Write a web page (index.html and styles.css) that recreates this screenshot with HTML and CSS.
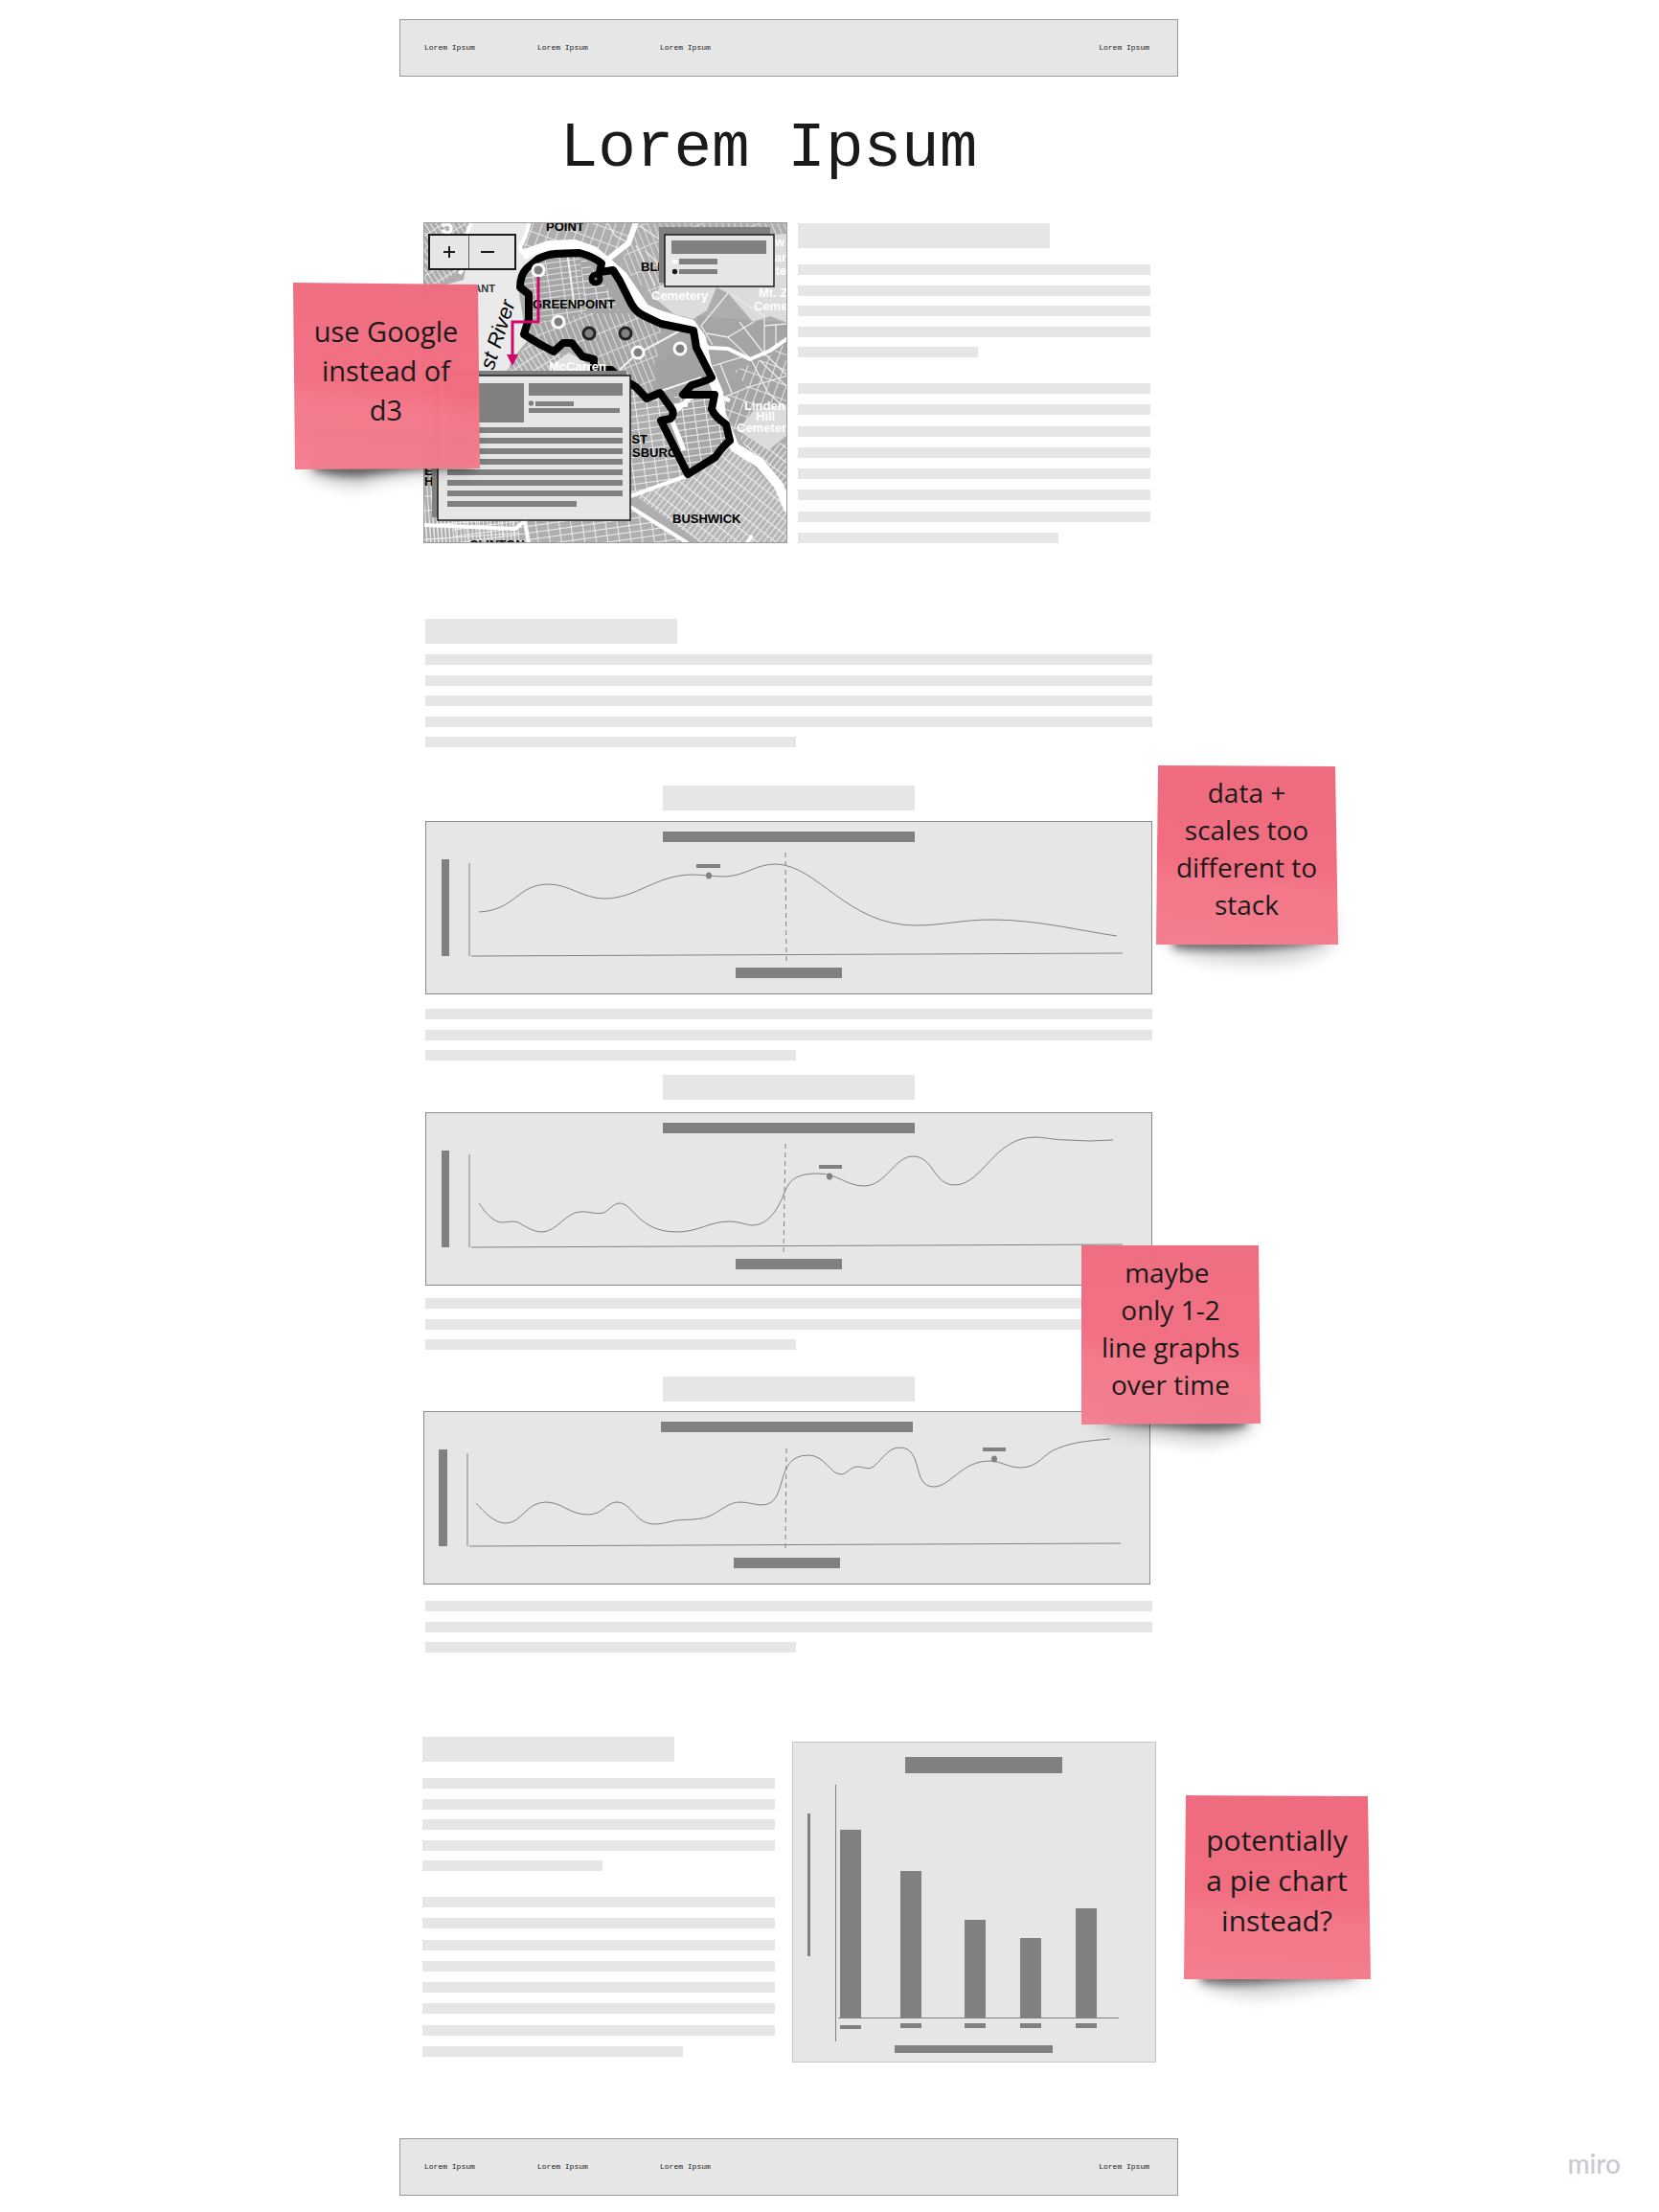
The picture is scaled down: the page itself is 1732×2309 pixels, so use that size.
FILE: index.html
```html
<!DOCTYPE html>
<html lang="en">
<head>
<meta charset="utf-8">
<meta name="viewport" content="width=device-width, initial-scale=1">
<title>Lorem Ipsum</title>
<link rel="stylesheet" href="styles.css">
</head>
<body>
<div class="board">
  <div class="wireframe">
    <header>
      <nav class="nav" aria-label="Main">
        <a href="#map">Lorem Ipsum</a>
        <a href="#trends">Lorem Ipsum</a>
        <a href="#totals">Lorem Ipsum</a>
        <a href="#top">Lorem Ipsum</a>
      </nav>
    </header>

    <main>
      <h1 class="title">Lorem Ipsum</h1>

      <section class="intro" id="map">
        <div class="map">
          <svg class="drawing" viewBox="0 0 380 335" role="img" aria-label="Map of Greenpoint">
            <defs>
              <pattern id="streets-core" width="15" height="6" patternUnits="userSpaceOnUse" patternTransform="rotate(-8)">
                <path d="M0 .5H15M.5 0V6" stroke="#e2e2e2" stroke-width="1"/>
              </pattern>
              <pattern id="streets-mid" width="6" height="22" patternUnits="userSpaceOnUse" patternTransform="rotate(-22)">
                <path d="M0 .5H6M.5 0V22" stroke="#dedede" stroke-width="1"/>
              </pattern>
              <pattern id="streets-north" width="9" height="15" patternUnits="userSpaceOnUse" patternTransform="rotate(20)">
                <path d="M0 .5H9M.5 0V15" stroke="#e6e6e6" stroke-width="1"/>
              </pattern>
              <pattern id="streets-dense" width="5" height="12" patternUnits="userSpaceOnUse" patternTransform="rotate(38)">
                <path d="M0 .5H5M.5 0V12" stroke="#ededed" stroke-width="1.1"/>
              </pattern>
              <pattern id="streets-south" width="12" height="7" patternUnits="userSpaceOnUse" patternTransform="rotate(-8)">
                <path d="M0 .5H12M.5 0V7" stroke="#ededed" stroke-width="1"/>
              </pattern>
              <pattern id="streets-west" width="5" height="12" patternUnits="userSpaceOnUse" patternTransform="rotate(-32)">
                <path d="M0 .5H5M.5 0V12" stroke="#e8e8e8" stroke-width="1"/>
              </pattern>
              <pattern id="streets-bank" width="4" height="15" patternUnits="userSpaceOnUse" patternTransform="rotate(-4)">
                <path d="M0 .5H4M.5 0V15" stroke="#ededed" stroke-width="1"/>
              </pattern>
              <path id="district" d="M120 38Q128 34 138 33L163 32Q178 36 186 43L184 52L198 50L205 61L217 85Q222 94 231 98L248 106L282 113L285 131L301 162Q298 165 280 170L271 180H304L301 195Q304 203 316 211L320 228Q313 233 305 245L276 263L248 207L258 205Q262 201 260 196L247 178L233 184L222 172L205 162L196 154H178V143L166 140L155 126H146L136 135L121 127L105 117L110 101V75L101 68Q101 55 108 48Z"/>
              <clipPath id="district-clip"><use href="#district"/></clipPath>
            </defs>
            <rect width="380" height="335" fill="#aeaeae"/>
            <!-- street grids around the district -->
            <path d="M0 0H50L36 51L0 78Z" fill="url(#streets-west)"/>
            <path d="M0 230H30V335H0Z" fill="url(#streets-bank)"/>
            <path d="M104 0H226L212 22L190 40L158 22L130 22L104 30Z" fill="url(#streets-north)"/>
            <path d="M226 0H380V12L330 50L305 68L285 98L238 76L206 45L214 22Z" fill="url(#streets-mid)"/>
            <path d="M285 98L380 105V210L328 214L312 200L298 140Z" fill="#a5a5a5"/>
            <path d="M325 155L360 140L380 125V210L350 190ZM298 188L380 160V205L325 218Z" fill="url(#streets-north)"/>
            <path d="M216 165L246 180L260 200L250 207L276 264L217 282Z" fill="url(#streets-south)"/>
            <path d="M216 282L276 264L320 230L380 292V335H290Z" fill="#b7b7b7"/>
            <path d="M216 282L276 264L320 230L380 292V335H290Z" fill="url(#streets-dense)"/>
            <path d="M328 222L380 232V300L350 254Z" fill="url(#streets-dense)"/>
            <path d="M110 312H216V300L275 335H30V312Z" fill="url(#streets-south)"/>
            <path d="M0 312H100V335H0Z" fill="url(#streets-bank)"/>
            <path d="M86 154L110 126L150 140L178 152V160H86Z" fill="url(#streets-west)"/>
            <!-- river and cemeteries -->
            <path d="M50 0H111L106 16L101 26L104 35L130 28L112 42L99 68L106 112L110 122L95 140L86 158L60 200L0 230V80L20 66L42 60L46 36L40 26Z" fill="#eaeaea"/>
            <path d="M50 0L40 26L46 38L38 54M111 0L106 16L101 26L104 34" fill="none" stroke="#fff" stroke-width="4"/>
            <path d="M240 78L248 66L310 60L372 62L380 72V105L362 98L344 104L318 74L306 68L296 92L282 101L262 96Z" fill="#dcdcdc"/>
            <path d="M345 14L380 12V72H366Z" fill="#dcdcdc"/>
            <path d="M328 217L345 196L380 190V222L360 238Z" fill="#dcdcdc"/>
            <!-- loose roads -->
            <g fill="none" stroke="#ececec" stroke-width="1.3">
              <path d="M318 74L290 108L302 128M345 104L318 120L296 116M322 76L356 98V108L380 106M330 104L354 135L380 160M342 143L360 178L380 196M300 188L340 172L380 160M302 150L335 140M322 178L310 148M352 145L380 172M356 108V140M318 120L342 143M368 106V128"/>
              <path d="M226 4L250 20M232 30L250 48M222 24L242 66M192 0L200 14L215 22"/>
            </g>
            <!-- creek -->
            <g fill="none" stroke="#fff" stroke-linejoin="round">
              <path d="M104 34L131 24L158 23L178 30L191 41L208 56L231 90L250 99L279 106L290 121L296 150L308 178L311 201L325 235L351 251L371 275L382 301" stroke-width="10"/>
              <path d="M191 40L214 22L222 0" stroke-width="6"/>
              <path d="M290 124L298 131L318 132L341 143L362 134L382 120M308 182L320 186" stroke-width="4"/>
            </g>
            <path d="M214 60L230 86L248 92L280 102L286 116L252 106L228 100Z" fill="#fff"/>
            <!-- district interior -->
            <use href="#district" fill="#a6a6a6"/>
            <g clip-path="url(#district-clip)">
              <path d="M100 30H162L170 95L150 100L104 108Z" fill="url(#streets-core)"/>
              <path d="M104 108L168 95H222L248 108L240 180L100 130Z" fill="url(#streets-mid)"/>
              <path d="M164 32L186 60L205 92L168 90Z" fill="url(#streets-south)"/>
              <path d="M262 182L320 185V270H270Z" fill="url(#streets-south)"/>
              <path d="M241 148L283 125L300 160L248 176Z" fill="#a2a2a2"/>
              <path d="M150 30L158 90M205 154L222 138L270 112M248 176L290 162" fill="none" stroke="#f2f2f2" stroke-width="2"/>
              <path d="M258 202L280 182M256 198L272 238M262 192L276 190" fill="none" stroke="#fff" stroke-width="5"/>
            </g>
            <path d="M132 150L152 136L166 144L176 152V158H140Z" fill="#e2e2e2"/>
            <path d="M216 286L274 265M216 297L276 335M0 316L96 320L110 308M106 312L110 335M338 335L343 327" fill="none" stroke="#fff" stroke-width="4"/>
            <use href="#district" fill="none" stroke="#000" stroke-width="8" stroke-linejoin="round"/>
            <circle cx="180" cy="59" r="4.500" fill="#808080" stroke="#000" stroke-width="6"/>
            <!-- place names -->
            <g class="place">
              <text x="128" y="9">POINT</text>
              <text x="114" y="90">GREENPOINT</text>
              <text x="227" y="51">BLI</text>
              <text x="234" y="231" text-anchor="end">ST</text>
              <text x="265" y="245" text-anchor="end">SBURG</text>
              <text x="260" y="314">BUSHWICK</text>
              <text x="48" y="341">CLINTON</text>
              <text x="1" y="264">E</text>
              <text x="1" y="275">H</text>
            </g>
            <text class="place-light" x="75" y="73" text-anchor="end">ANT</text>
            <g class="place-white">
              <text x="238" y="81">Cemetery</text>
              <text x="377" y="25" text-anchor="end">w</text>
              <text x="379" y="41" text-anchor="end">ar</text>
              <text x="379" y="55" text-anchor="end">te</text>
              <text x="350" y="78">Mt. Z</text>
              <text x="345" y="92">Ceme</text>
              <text x="335" y="196">Linden</text>
              <text x="347" y="207">Hill</text>
              <text x="327" y="219">Cemeter</text>
              <text x="131" y="155">McCarren</text>
            </g>
            <text class="place-route" x="18" y="12">5</text>
            <text class="place-river" transform="translate(96 84) rotate(-72)" text-anchor="end">st River</text>
            <!-- pins -->
            <g fill="#808080" stroke-width="3">
              <g stroke="#fff">
                <circle cx="120" cy="50" r="6"/><circle cx="141" cy="104" r="6"/>
                <circle cx="224" cy="136" r="6"/><circle cx="268" cy="132" r="6"/>
              </g>
              <g stroke="#222">
                <circle cx="173" cy="116" r="6"/><circle cx="211" cy="116" r="6"/>
              </g>
            </g>
            <path d="M120 57V104H93V140" fill="none" stroke="#d1086a" stroke-width="3"/>
            <path d="M87 138H99L93 150Z" fill="#d1086a"/>
            <!-- legend -->
            <rect x="246" y="5" width="116" height="58" fill="#808080"/>
            <rect x="252" y="13" width="114" height="54" fill="#e6e6e6" stroke="#1a1a1a" stroke-width="1.500"/>
            <path d="M259 19H358V33H259ZM267 38H307V44H267ZM267 49H307V54H267Z" fill="#808080"/>
            <circle cx="262.500" cy="41" r="2.500" fill="#fff"/>
            <circle cx="262.500" cy="51.500" r="2.700" fill="#1a1a1a"/>
            <!-- detail card -->
            <rect x="9" y="155" width="203" height="153" fill="#808080"/>
            <rect x="15" y="160" width="201" height="151" fill="#e6e6e6" stroke="#1a1a1a" stroke-width="1.500"/>
            <path d="M25 168H105V209H25ZM110 168H208V181H110ZM117 187H157V192H117ZM110 194H205V199H110ZM25 214H208V220H25ZM25 225H208V231H25ZM25 236H208V242H25ZM25 247H208V253H25ZM25 258H208V264H25ZM25 269H208V275H25ZM25 280H208V286H25ZM25 291H160V297H25Z" fill="#808080"/>
            <circle cx="112.500" cy="189" r="2.700" fill="#808080"/>
            <rect x=".5" y=".5" width="379" height="334" fill="none" stroke="#9a9a9a"/>
          </svg>
          <div class="map-zoom">
            <button type="button" aria-label="Zoom in">
              <svg width="12" height="12" viewBox="0 0 12 12"><path d="M0 6H12M6 0V12" stroke="#1a1a1a" stroke-width="2"/></svg>
            </button>
            <button type="button" aria-label="Zoom out">
              <svg width="14" height="12" viewBox="0 0 14 12"><path d="M0 6H14" stroke="#1a1a1a" stroke-width="2"/></svg>
            </button>
          </div>
        </div>
        <div class="copy">
          <div class="heading"></div>
          <div class="lines lines-5"><i></i><i></i><i></i><i></i><i class="half"></i></div>
          <div class="lines lines-8"><i></i><i></i><i></i><i></i><i></i><i></i><i></i><i class="most"></i></div>
        </div>
      </section>

      <section class="trends" id="trends">
        <div class="heading"></div>
        <div class="lines lines-5"><i></i><i></i><i></i><i></i><i class="half"></i></div>

        <article class="trend trend-first">
          <div class="heading"></div>
          <svg class="drawing" viewBox="0 0 759 181" role="img" aria-label="Line graph">
            <rect class="frame" x=".5" y=".5" width="758" height="180"/>
            <path class="solid" d="M248 11H511V22H248ZM17 40H25V141H17ZM324 153H435V164H324ZM283 45H308V49H283Z"/>
            <path class="axis" d="M46 44V141M48 141L728 138"/>
            <path class="cutoff" d="M376 33L377 148"/>
            <path class="curve" d="M56 95C95 93 95 66 129 66C150 66 165 81 187 81C220 81 240 57 277 56C290 56 300 58 313 58C335 57 345 45 366 45C410 46 440 109 512 109C540 109 560 103 591 103C640 103 685 115 722 120"/>
            <ellipse class="solid" cx="296" cy="57" rx="3" ry="3.500"/>
          </svg>
          <div class="lines lines-3"><i></i><i></i><i class="half"></i></div>
        </article>

        <article class="trend trend-second">
          <div class="heading"></div>
          <svg class="drawing" viewBox="0 0 759 181" role="img" aria-label="Line graph">
            <rect class="frame" x=".5" y=".5" width="758" height="180"/>
            <path class="solid" d="M248 11H511V22H248ZM17 40H25V141H17ZM324 153H435V164H324ZM411 55H435V59H411Z"/>
            <path class="axis" d="M46 44V141M48 141L728 138"/>
            <path class="cutoff" d="M376 33L374 148"/>
            <path class="curve" d="M56 95C62 104 71 115 80 115C85 115 91 113 97 115C104 119 113 125 122 125C137 125 147 104 162 104C170 103 177 107 186 105C192 102 197 95 203 95C217 95 222 125 263 125C285 125 297 114 317 114C328 114 335 118 342 118C354 118 363 108 369 97C379 79 376 64 410 64C430 64 440 77 458 77C481 77 490 46 509 46C531 46 530 76 553 76C583 75 593 26 637 26C645 26 657 29 670 29Q692 31 718 29"/>
            <ellipse class="solid" cx="422" cy="67" rx="3" ry="3.500"/>
          </svg>
          <div class="lines lines-3"><i></i><i></i><i class="half"></i></div>
        </article>

        <article class="trend trend-third">
          <div class="heading"></div>
          <svg class="drawing" viewBox="0 0 759 181" role="img" aria-label="Line graph">
            <rect class="frame" x=".5" y=".5" width="758" height="180"/>
            <path class="solid" d="M248 11H511V22H248ZM16 40H25V141H16ZM324 153H435V164H324ZM584 38H608V42H584Z"/>
            <path class="axis" d="M46 44V141M48 141L728 138"/>
            <path class="cutoff" d="M379 39L378 146"/>
            <path class="curve" d="M55 96C63 105 74 117 86 117C103 117 107 95 128 95C145 95 152 108 172 108C188 108 191 95 202 95C218 95 220 118 242 118C250 118 258 115 264 114C275 113 289 114 300 109C312 103 319 95 331 95C340 95 346 98 353 98C383 98 364 46 402 46C419 46 425 66 436 66C442 66 446 58 453 58C460 58 462 61 468 59C477 54 484 38 497 38C523 38 509 79 533 79C550 79 562 52 591 52C603 52 611 59 623 59C643 59 647 44 662 39C679 32 695 31 717 29"/>
            <ellipse class="solid" cx="596" cy="50" rx="3" ry="3.500"/>
          </svg>
          <div class="lines lines-3"><i></i><i></i><i class="half"></i></div>
        </article>
      </section>

      <section class="totals" id="totals">
        <div class="copy">
          <div class="heading"></div>
          <div class="lines lines-5"><i></i><i></i><i></i><i></i><i class="half"></i></div>
          <div class="lines lines-8"><i></i><i></i><i></i><i></i><i></i><i></i><i></i><i class="most"></i></div>
        </div>
        <svg class="drawing bar-chart" viewBox="0 0 380 335" role="img" aria-label="Bar chart">
          <rect class="frame" x=".5" y=".5" width="379" height="334"/>
          <path class="solid" d="M118 16H282V33H118ZM16 75H19V224H16ZM107 317H272V325H107Z"/>
          <path class="solid" d="M50 92H72V289H50ZM113 135H135V289H113ZM180 186H202V289H180ZM238 205H260V289H238ZM296 174H318V289H296Z"/>
          <path class="solid" d="M50 296H72V300H50ZM113 294H135V299H113ZM180 294H202V299H180ZM238 294H260V299H238ZM296 294H318V299H296Z"/>
          <path class="axis" d="M45.500 45V313M48 288.500H341"/>
        </svg>
      </section>
    </main>

    <aside class="note note-map">
      <svg class="note-paper" viewBox="0 0 195 195" preserveAspectRatio="none" aria-hidden="true">
        <defs>
          <linearGradient id="paper" x1=".1" y1="0" x2="0" y2="1">
            <stop offset="0" stop-color="#ef6c80"/><stop offset=".5" stop-color="#f16d80"/>
            <stop offset=".62" stop-color="#f3788a"/><stop offset=".8" stop-color="#f27a8b"/><stop offset="1" stop-color="#f47f90"/>
          </linearGradient>
          <filter id="soft" x="-20%" y="-100%" width="140%" height="300%"><feGaussianBlur stdDeviation="4"/></filter>
          <filter id="softer" x="-20%" y="-100%" width="140%" height="300%"><feGaussianBlur stdDeviation="8"/></filter>
        </defs>
        <path d="M10 150H190V196Q110 200 70 213Q35 212 14 198Z" fill="#000" opacity=".2" filter="url(#softer)"/>
        <path d="M20 180H186V193Q120 194 75 202Q45 204 22 196Z" fill="#000" opacity=".5" filter="url(#soft)"/>
        <path d="M0 0L193 2L195 194L2 195Z" fill="url(#paper)" fill-opacity=".98"/>
      </svg>
      <p>use Google<br>instead of<br>d3</p>
    </aside>
    <aside class="note note-scales">
      <svg class="note-paper" viewBox="0 0 190 186" preserveAspectRatio="none" aria-hidden="true">
        <path d="M10 150H185V188Q150 210 90 206Q35 204 14 190Z" fill="#000" opacity=".16" filter="url(#softer)"/>
        <path d="M18 170H170V184Q120 194 70 192Q40 192 18 190Z" fill="#000" opacity=".48" filter="url(#soft)"/>
        <path d="M2 0L187 1L190 186L0 186Z" fill="url(#paper)"/>
      </svg>
      <p>data +<br>scales too<br>different to<br>stack</p>
    </aside>
    <aside class="note note-graphs">
      <svg class="note-paper" viewBox="0 0 187 187" preserveAspectRatio="none" aria-hidden="true">
        <path d="M10 150H180V190Q150 212 110 206Q60 200 14 188Z" fill="#000" opacity=".18" filter="url(#softer)"/>
        <path d="M24 170H172V189Q140 196 110 192Q70 189 30 185Z" fill="#000" opacity=".5" filter="url(#soft)"/>
        <path d="M0 0L185 0L187 186L0 187Z" fill="url(#paper)" fill-opacity=".98"/>
      </svg>
      <p>maybe&nbsp;<br>only 1-2<br>line graphs<br>over time</p>
    </aside>
    <aside class="note note-pie">
      <svg class="note-paper" viewBox="0 0 195 192" preserveAspectRatio="none" aria-hidden="true">
        <path d="M10 150H185V194Q130 204 80 210Q35 208 14 196Z" fill="#000" opacity=".18" filter="url(#softer)"/>
        <path d="M18 175H174V190Q120 192 75 197Q40 199 18 195Z" fill="#000" opacity=".48" filter="url(#soft)"/>
        <path d="M2 0L192 1L195 192L0 192Z" fill="url(#paper)"/>
      </svg>
      <p>potentially<br>a pie chart<br>instead?</p>
    </aside>
  </div>

  <footer class="footer">
    <nav class="nav" aria-label="Footer">
      <a href="#map">Lorem Ipsum</a>
      <a href="#trends">Lorem Ipsum</a>
      <a href="#totals">Lorem Ipsum</a>
      <a href="#top">Lorem Ipsum</a>
    </nav>
  </footer>
  <div class="brand">miro</div>
</div>
</body>
</html>
```

FILE: styles.css
```css
* {
  box-sizing: border-box;
}

body {
  margin: 0;
  background: #fff;
  color: #1a1a1a;
  font-family: "Open Sans", "Noto Sans", sans-serif;
}

.board {
  display: grid;
  grid-template-columns: 417fr 813fr 502fr;
  padding: 20px 0 17px;
}

.wireframe {
  grid-column: 2;
  position: relative;
  min-width: 0;
}

/* Header and footer bars */
.nav {
  display: grid;
  grid-template-columns: 118px 128px 1fr auto;
  align-items: center;
  height: 60px;
  padding: 0 29px 0 25px;
  background: #e6e6e6;
  border: 1px solid #999;
  font: 8px/12px "Liberation Mono", monospace;
}

.nav a {
  color: #1a1a1a;
  text-decoration: none;
}

.footer {
  grid-column: 2;
  margin-top: 79px;
}

.brand {
  grid-column: 3;
  align-self: end;
  justify-self: end;
  margin-right: 40px;
  padding-bottom: 4px;
  color: #c9c8d3;
  font: 500 28px/60px Lato, sans-serif;
}

.title {
  margin: 36px 0;
  padding-right: 42px;
  font: 400 66px/80px "Liberation Mono", monospace;
  text-align: center;
}

/* Placeholder copy */
.heading {
  width: 263px;
  max-width: 100%;
  height: 26px;
  background: #e6e6e6;
}

.lines {
  display: flex;
  flex-direction: column;
  justify-content: space-between;
}

.lines i {
  height: 11px;
  background: #e6e6e6;
}

.lines .half {
  width: 51%;
}

.lines .most {
  width: 74%;
}

.lines-3 {
  min-height: 54px;
}

.lines-5 {
  min-height: 97px;
}

.lines-8 {
  min-height: 167px;
}

.copy .lines-5 {
  margin: 17px 0 27px;
}

.drawing {
  display: block;
  width: 100%;
  height: auto;
}

/* Map and intro */
.intro {
  display: grid;
  grid-template-columns: 380fr 368fr;
  gap: 11px;
  align-items: start;
  padding: 0 29px 0 25px;
}

.intro .copy {
  padding-top: 1px;
}

.map {
  position: relative;
}

.map-zoom {
  position: absolute;
  left: 5px;
  top: 12px;
  display: flex;
  width: 92px;
  height: 38px;
  background: #e6e6e6;
  border: 2px solid #1a1a1a;
}

.map-zoom button {
  flex: 1;
  display: flex;
  align-items: center;
  justify-content: center;
  padding: 0;
  background: none;
  border: 0;
}

.map-zoom button:last-child {
  padding-right: 8px;
  border-left: 1px solid #666;
}

.place {
  font: 700 13px "Liberation Sans", sans-serif;
}

.place-light {
  fill: #333;
  font: 700 11px "Liberation Sans", sans-serif;
}

.place-white {
  fill: #fff;
  font: 700 13px "Liberation Sans", sans-serif;
}

.place-route {
  fill: #fff;
  font: 700 24px "Liberation Sans", sans-serif;
}

.place-river {
  font: italic 22px "Liberation Sans", sans-serif;
}

/* Line graphs */
.trends {
  margin-top: 79px;
  padding: 0 27px;
}

.trends > .lines {
  margin: 11px 0 40px;
}

.trend > .heading {
  margin: 0 auto;
}

.trend .drawing {
  margin: 11px 0 15px;
}

.trend-second {
  margin-top: 15px;
}

.trend-second .drawing {
  margin: 13px 0;
}

.trend-third {
  margin-top: 28px;
}

.trend-third .drawing {
  margin: 10px 0 17px -2px;
}

.frame {
  fill: #e6e6e6;
  stroke: #8c8c8c;
}

.solid {
  fill: #808080;
}

.axis,
.curve,
.cutoff {
  fill: none;
  stroke: #808080;
}

.cutoff {
  stroke-dasharray: 5 4;
}

/* Bar chart */
.totals {
  display: grid;
  grid-template-columns: 368fr 380fr;
  gap: 18px;
  align-items: end;
  margin-top: 88px;
  padding: 0 23px 0 24px;
}

.totals .copy {
  padding-bottom: 6px;
}

.bar-chart .frame {
  stroke: #c4c4c4;
}

/* Sticky notes pinned over the wireframe */
.note {
  position: absolute;
  display: flex;
  align-items: center;
  justify-content: center;
  padding: 0 1px 14px 0;
  text-align: center;
}

.note p {
  position: relative;
  margin: 0;
  white-space: nowrap;
}

.note-paper {
  position: absolute;
  inset: 0;
  width: 100%;
  height: 100%;
  overflow: visible;
}

.note-map {
  left: -111px;
  top: 275px;
  width: 195px;
  height: 195px;
  padding-bottom: 12px;
  font-size: 29px;
  line-height: 41px;
}

.note-scales {
  left: calc(100% - 23px);
  top: 779px;
  width: 190px;
  height: 187px;
  font-size: 28px;
  line-height: 39px;
}

.note-graphs {
  left: calc(100% - 101px);
  top: 1280px;
  width: 187px;
  height: 187px;
  font-size: 28px;
  line-height: 39px;
}

.note-pie {
  left: calc(100% + 6px);
  top: 1854px;
  width: 195px;
  height: 192px;
  font-size: 30px;
  line-height: 42px;
}
```
